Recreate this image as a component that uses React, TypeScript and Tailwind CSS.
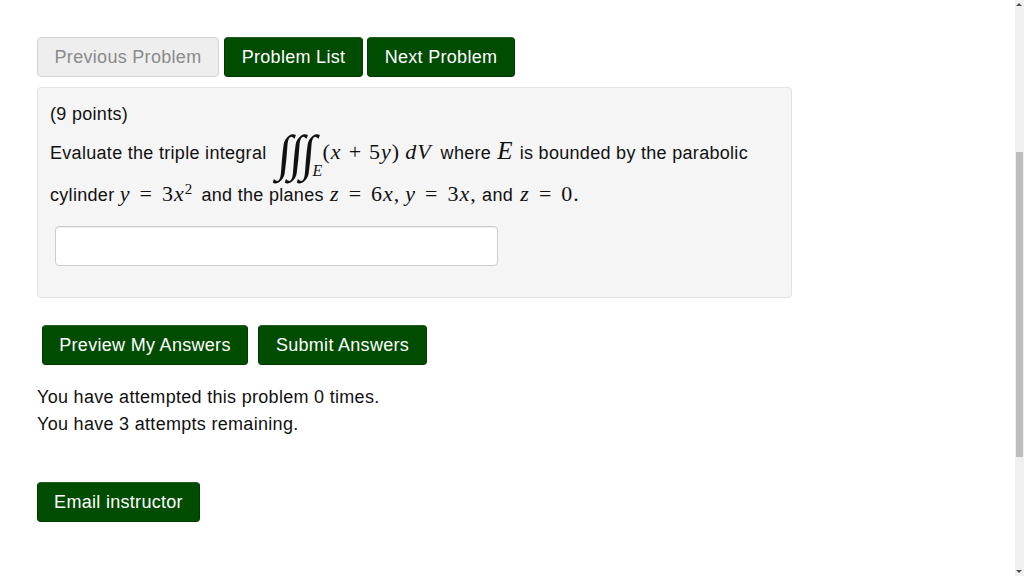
import React from 'react';

const BTN = 'inline-flex items-center justify-center h-[40px] rounded-[4px] border border-[#003a00] border-t-[#1f5f1f] bg-[#004c00] text-white text-[18px] tracking-[0.3px]';

function M({ children }: { children: React.ReactNode }) {
  return <span className="font-['Liberation_Serif',serif] text-[22px] tracking-[1px]">{children}</span>;
}

function I({ children }: { children: React.ReactNode }) {
  return <i className="italic">{children}</i>;
}

function Plus({ children }: { children: React.ReactNode }) {
  return <span className="mx-[7px]">{children}</span>;
}

function Eq() {
  return <span className="mx-[9px]">=</span>;
}

function Integral() {
  return <span className="w-[12px] text-center -skew-x-[5deg] font-['Liberation_Serif',serif] text-[50px] leading-[50px]">∫</span>;
}

export default function App() {
  return (
    <div className="h-[576px] flex overflow-hidden bg-white font-['Liberation_Sans',sans-serif] text-[#111] tracking-[0.3px]">
      <main className="flex-1 min-w-0 overflow-hidden pl-[37px] pt-[37px]">
        <div className="flex">
          <button type="button" className="inline-flex items-center justify-center w-[182px] h-[40px] rounded-[4px] border border-[#d4d4d4] bg-[#eeeeee] text-[#8a8a8a] text-[18px] tracking-[0.3px] mr-[5px]">Previous Problem</button>
          <button type="button" className={`${BTN} w-[139px] mr-[4px]`}>Problem List</button>
          <button type="button" className={`${BTN} w-[148px]`}>Next Problem</button>
        </div>

        <section className="mt-[10px] w-[755px] h-[211px] rounded-[4px] border border-[#e3e3e3] bg-[#f5f5f5] pl-[12px] pt-[16px] text-[18px]">
          <p className="leading-[21px]">(9 points)</p>
          <div className="mt-[3px] h-[50px] flex items-baseline whitespace-nowrap">
            <span className="leading-[50px]">Evaluate the triple integral</span>
            <span className="relative self-center ml-[11px] w-[45px] h-[50px] shrink-0 flex">
              <Integral />
              <Integral />
              <Integral />
              <span className="absolute left-[35px] top-[34px] font-['Liberation_Serif',serif] italic text-[16px] leading-[18px]">E</span>
            </span>
            <M>(<I>x</I><Plus>+</Plus>5<I>y</I>)<span className="ml-[5px]"><I>dV</I></span></M>
            <span className="ml-[9px]">where</span>
            <span className="ml-[6px] mr-[7px] font-['Liberation_Serif',serif] text-[25px]"><I>E</I></span>
            <span>is bounded by the parabolic</span>
          </div>
          <div className="-mt-[1px] h-[30px] flex items-baseline whitespace-pre">
            <span className="leading-[30px]">cylinder </span>
            <M><I>y</I><Eq />3<I>x</I><sup className="text-[15px] -top-[7px] relative align-baseline">2</sup></M>
            <span className="ml-[3px]"> and the planes </span>
            <span className="ml-[1px]"><M><I>z</I><Eq />6<I>x</I>,<span className="ml-[5px]"><I>y</I></span><Eq />3<I>x</I>,</M></span>
            <span> and </span>
            <span className="ml-[2px]"><M><I>z</I><Eq />0.</M></span>
          </div>
          <input type="text" className="block mt-[19px] ml-[5px] w-[443px] h-[40px] rounded-[4px] border border-[#cccccc] bg-white outline-none shadow-[inset_0_1px_1px_rgba(0,0,0,0.075)]" />
        </section>

        <div className="flex gap-[10px] mt-[27px] ml-[5px]">
          <button type="button" className={`${BTN} w-[206px]`}>Preview My Answers</button>
          <button type="button" className={`${BTN} w-[169px]`}>Submit Answers</button>
        </div>

        <div className="mt-[19px] text-[18px] leading-[27px]">
          <p>You have attempted this problem 0 times.</p>
          <p>You have 3 attempts remaining.</p>
        </div>

        <button type="button" className={`${BTN} w-[163px] mt-[44px]`}>Email instructor</button>
      </main>

      <div className="w-[9px] shrink-0 bg-[#f0f0f0] relative">
        <span className="absolute top-[3px] left-[1px] w-0 h-0 border-x-[3px] border-x-transparent border-b-[3px] border-b-[#505050]" />
        <div className="absolute top-[152px] w-full h-[305px] px-[1px]"><div className="h-full bg-[#bdbdbd]" /></div>
        <span className="absolute bottom-[3px] left-[1px] w-0 h-0 border-x-[3px] border-x-transparent border-t-[3px] border-t-[#505050]" />
      </div>
    </div>
  );
}
